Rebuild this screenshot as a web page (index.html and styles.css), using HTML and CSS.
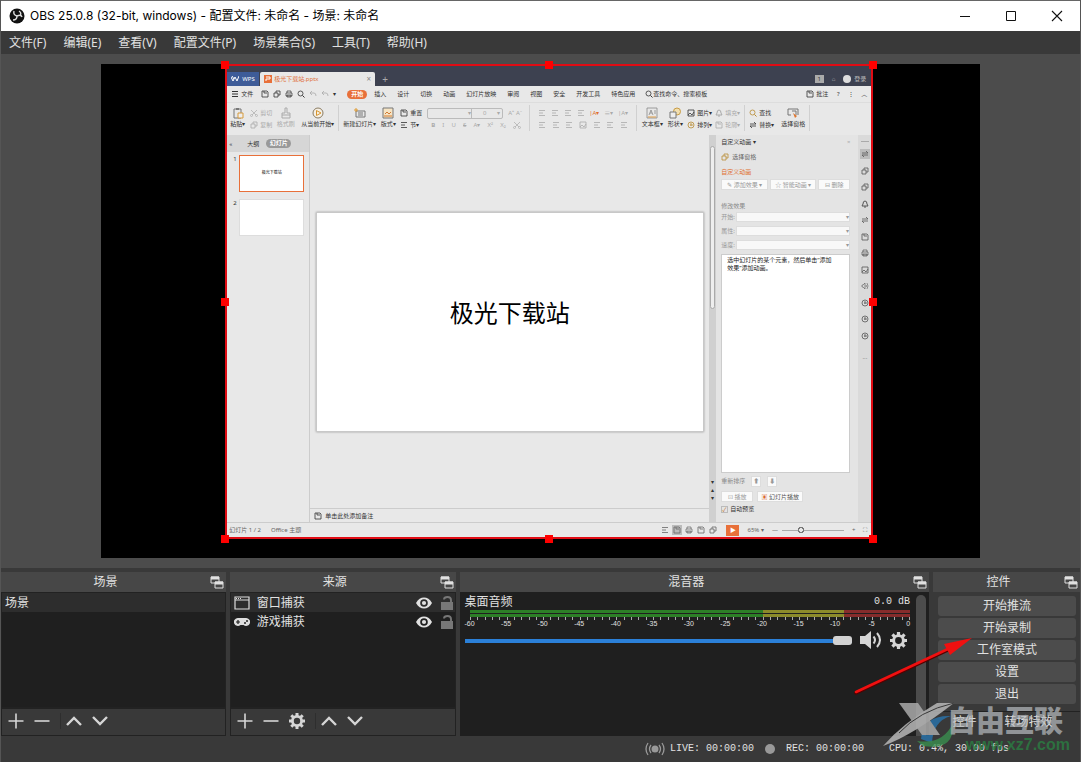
FILE: index.html
```
<!DOCTYPE html>
<html lang="zh-CN">
<head>
<meta charset="utf-8">
<title>OBS 25.0.8</title>
<link rel="stylesheet" href="styles.css">
</head>
<body>
<svg class="defs" aria-hidden="true">
  <symbol id="plus" viewBox="0 0 16 16"><path d="M8 .5v15M.5 8h15" fill="none" stroke="currentColor" stroke-width="1.6"/></symbol>
  <symbol id="minus" viewBox="0 0 16 16"><path d="M.5 8h15" fill="none" stroke="currentColor" stroke-width="1.6"/></symbol>
  <symbol id="up" viewBox="0 0 16 16"><path d="M1 12l7-7 7 7" fill="none" stroke="currentColor" stroke-width="2.4"/></symbol>
  <symbol id="down" viewBox="0 0 16 16"><path d="M1 4l7 7 7-7" fill="none" stroke="currentColor" stroke-width="2.4"/></symbol>
  <symbol id="gear" viewBox="0 0 16 16"><circle cx="8" cy="8" r="4.6" fill="none" stroke="currentColor" stroke-width="2.8"/><path d="M8 0v3M8 13v3M0 8h3M13 8h3M2.3 2.3l2.2 2.2M11.5 11.5l2.2 2.2M2.3 13.7l2.2-2.2M11.5 4.5l2.2-2.2" stroke="currentColor" stroke-width="3"/></symbol>
  <symbol id="eye" viewBox="0 0 16 12"><path fill="currentColor" fill-rule="evenodd" d="M0 6C2 2.300 5 .5 8 .5S14 2.300 16 6c-2 3.700-5 5.500-8 5.500S2 9.700 0 6zm8-3.800a3.800 3.800 0 1 0 0 7.600 3.800 3.800 0 0 0 0-7.600z"/><circle cx="8" cy="6" r="2.100" fill="currentColor"/></symbol>
  <symbol id="lock" viewBox="0 0 14 14"><path d="M1 6h12v8H1z" fill="currentColor"/><path d="M4 3.500Q4 1 7.500 1T11 4V6" fill="none" stroke="currentColor" stroke-width="1.900"/></symbol>
  <symbol id="float" viewBox="0 0 14 13"><path d="M1 1h8v6H1zM5 6h8v6H5z" fill="#474747" stroke="currentColor"/><path d="M1 2h8M5 7h8" stroke="currentColor" stroke-width="3"/></symbol>
  <symbol id="doc" viewBox="0 0 8 8"><path d="M1 1h5l1 1v5H1zM3 1v2h3" fill="none" stroke="currentColor" stroke-width=".8"/></symbol>
  <symbol id="pages" viewBox="0 0 8 8"><path d="M1 3h4v4H1zM3 3V1h4v4H5" fill="none" stroke="currentColor" stroke-width=".8"/></symbol>
  <symbol id="print" viewBox="0 0 8 8"><path d="M1 3h6v3H1zM2 3V1h4v2M2 5h4v2H2z" fill="none" stroke="currentColor" stroke-width=".7"/></symbol>
  <symbol id="find" viewBox="0 0 8 8"><circle cx="3.500" cy="3.500" r="2.500" fill="none" stroke="currentColor" stroke-width=".8"/><path d="M5.500 5.500L7.500 7.500" stroke="currentColor"/></symbol>
  <symbol id="undo" viewBox="0 0 8 8"><path d="M3 1L1 3l2 2M1 3h4q2 0 2 3" fill="none" stroke="currentColor" stroke-width=".8"/></symbol>
  <symbol id="cut" viewBox="0 0 8 8"><path d="M1 1l5 5M7 1L2 6" stroke="currentColor" stroke-width=".7"/><circle cx="1.500" cy="6.500" r="1" fill="none" stroke="currentColor" stroke-width=".6"/><circle cx="6.500" cy="6.500" r="1" fill="none" stroke="currentColor" stroke-width=".6"/></symbol>
  <symbol id="clip" viewBox="0 0 12 12"><path d="M2 2h7v9H2z" fill="none" stroke="#777"/><path d="M4 1h3v2H4z" fill="#777"/><path d="M6 6h5v5H6z" fill="#eee" stroke="#d79a3a"/></symbol>
  <symbol id="brush" viewBox="0 0 12 12"><path d="M5 1h2v5h3v5H2V6h3zM2 8h8" fill="none" stroke="#aaa"/></symbol>
  <symbol id="play" viewBox="0 0 12 12"><circle cx="6" cy="6" r="5" fill="#f5efe4" stroke="#8a7b62"/><path d="M4.500 3.500L9 6 4.500 8.500z" fill="none" stroke="#d6942c"/></symbol>
  <symbol id="slide" viewBox="0 0 12 12"><path d="M2 4h9v6H2zM4 6h5M4 8h5" fill="none" stroke="#777"/><path d="M0 3h4M2 1v4" stroke="#e09a30"/></symbol>
  <symbol id="layout" viewBox="0 0 12 12"><path d="M1 1h10v10H1z" fill="#f6e4c4" stroke="#777"/><path d="M3 7l2-2 2 2 2-2M2 9h8" fill="none" stroke="#d27a32"/></symbol>
  <symbol id="lines" viewBox="0 0 8 8"><path d="M1 1.500h6M1 4h4M1 6.500h6" stroke="currentColor" stroke-width=".8"/></symbol>
  <symbol id="burger" viewBox="0 0 8 8"><path d="M1 1.500h6M1 4h6M1 6.500h6" stroke="currentColor"/></symbol>
  <symbol id="shape" viewBox="0 0 12 12"><circle cx="8" cy="4.500" r="3.500" fill="#f2dfaf" stroke="#c79b45"/><path d="M1 5h6v6H1z" fill="#eee" stroke="#777"/></symbol>
  <symbol id="text" viewBox="0 0 12 12"><path d="M1 1h10v10H1zM3 8l2-5 2 5M4 6h2M8 4h2M8 6h2" fill="none" stroke="#888" stroke-width=".8"/><path d="M2 10h8" stroke="#df9d48"/></symbol>
  <symbol id="pic" viewBox="0 0 8 8"><path d="M1 1h6v6H1zM1 6l2-2 2 2 2-3" fill="none" stroke="currentColor" stroke-width=".8"/></symbol>
  <symbol id="pane" viewBox="0 0 12 12"><path d="M4 8H1V2h10v6M5 4h4v4" fill="none" stroke="#777"/><path d="M6 6l4 3-2 2z" fill="#de762f"/></symbol>
  <symbol id="bell" viewBox="0 0 8 8"><path d="M1 6h6L6 4Q6 1 4 1T2 4zM3 7h2" fill="none" stroke="currentColor"/></symbol>
  <symbol id="swap" viewBox="0 0 8 8"><path d="M1 3h6L5 1M7 5H1l2 2" fill="none" stroke="currentColor" stroke-width=".8"/></symbol>
  <symbol id="ring" viewBox="0 0 8 8"><circle cx="4" cy="4" r="3" fill="none" stroke="currentColor" stroke-width=".8"/><path d="M4 2v3M3 4h3" stroke="currentColor" stroke-width=".8"/></symbol>
  <symbol id="sound" viewBox="0 0 8 8"><path d="M1 3h1l2-2v6L2 5H1zM5 3q1 1 0 2M6 1q2 3 0 6" fill="none" stroke="currentColor" stroke-width=".6"/></symbol>
</svg>
<div class="window">
  <header class="titlebar">
    <svg class="logo" viewBox="0 0 16 16"><circle cx="8" cy="8" r="7.500" fill="#111"/><path d="M5 3q-1 4 3 5 4-2 5 1M8 8q0 4-4 4M10 3q3 2 1 5" fill="none" stroke="#ddd" stroke-width="1.400"/></svg>
    <h1>OBS 25.0.8 (32-bit, windows) - 配置文件: 未命名 - 场景: 未命名</h1>
    <div class="winbtns">
      <button aria-label="最小化"><svg viewBox="0 0 12 12"><path d="M1 6.500h10" stroke="#111"/></svg></button>
      <button aria-label="最大化"><svg viewBox="0 0 12 12"><path d="M1.500 1.500h9v9h-9z" fill="none" stroke="#111"/></svg></button>
      <button aria-label="关闭"><svg viewBox="0 0 12 12"><path d="M1 1l10 10M11 1L1 11" stroke="#111" stroke-width="1.100"/></svg></button>
    </div>
  </header>
  <nav class="menubar">
    <button>文件(F)</button><button>编辑(E)</button><button>查看(V)</button><button>配置文件(P)</button><button>场景集合(S)</button><button>工具(T)</button><button>帮助(H)</button>
  </nav>
  <main class="preview">
    <div class="canvas">
      <div class="source">
        <div class="shot">
          <div class="w-title">
            <span class="w-brand"><svg viewBox="0 0 8 8"><path d="M0 2l2 4 2-4 2 4 2-5M1 1l2 3" fill="none" stroke="#fff"/></svg>WPS</span>
            <span class="w-tab"><svg viewBox="0 0 8 8"><path d="M0 0h8v8H0z" fill="#e8703a"/><path d="M2 2h4v2H2v2" fill="none" stroke="#fff"/></svg>极光下载站.pptx<b>×</b></span>
            <span class="w-plus">+</span>
            <span class="w-user"><i class="w-one">1</i><i>⌂</i><i class="w-face"></i>登录</span>
          </div>
          <div class="w-menu">
            <svg><use href="#burger"/></svg><span class="w-file">文件</span>
            <span class="w-quick"><svg><use href="#doc"/></svg><svg><use href="#pages"/></svg><svg><use href="#print"/></svg><svg><use href="#find"/></svg><svg class="dim"><use href="#undo"/></svg><svg class="dim"><use href="#undo"/></svg><i>▾</i></span>
            <b class="w-pill">开始</b>
            <span class="w-tabs"><span>插入</span><span>设计</span><span>切换</span><span>动画</span><span>幻灯片放映</span><span>审阅</span><span>视图</span><span>安全</span><span>开发工具</span><span>特色应用</span></span>
            <span class="w-search"><svg><use href="#find"/></svg>查找命令、搜索模板</span>
            <span class="w-right"><svg><use href="#doc"/></svg>批注<i>?</i><i>⋮</i><i>︿</i></span>
          </div>
          <div class="w-ribbon">
            <div class="big"><svg><use href="#clip"/></svg><span>粘贴▾</span></div>
            <div class="pair dim"><span><svg><use href="#cut"/></svg>剪切</span><span><svg><use href="#pages"/></svg>复制</span></div>
            <div class="big dim"><svg><use href="#brush"/></svg><span>格式刷</span></div>
            <div class="big"><svg><use href="#play"/></svg><span>从当前开始▾</span></div>
            <hr>
            <div class="big"><svg><use href="#slide"/></svg><span>新建幻灯片▾</span></div>
            <div class="big"><svg><use href="#layout"/></svg><span>版式▾</span></div>
            <div class="pair"><span><svg><use href="#doc"/></svg>重置</span><span><svg><use href="#lines"/></svg>节▾</span></div>
            <div class="pair dim"><span><i class="fontbox"><u>▾</u><u>0</u><u>▾</u></i><i>A⁺</i><i>A⁻</i></span><span class="spread"><b>B</b><i>I</i><i>U</i><s>S</s><i>A▾</i><i>X²</i><i>X₂</i><svg><use href="#cut"/></svg></span></div>
            <hr>
            <div class="pair dim"><span class="spread"><svg><use href="#lines"/></svg><svg><use href="#lines"/></svg><svg><use href="#lines"/></svg><svg><use href="#lines"/></svg><i class="hot">|A▾</i><i>≡▾</i><i>|A▾</i></span><span class="spread"><svg><use href="#lines"/></svg><svg><use href="#lines"/></svg><svg><use href="#lines"/></svg><svg><use href="#pic"/></svg><svg><use href="#lines"/></svg><svg><use href="#lines"/></svg><svg><use href="#lines"/></svg></span></div>
            <hr>
            <div class="big"><svg><use href="#text"/></svg><span>文本框▾</span></div>
            <div class="big"><svg><use href="#shape"/></svg><span>形状▾</span></div>
            <div class="pair"><span><svg><use href="#pic"/></svg>图片▾</span><span><svg class="gold"><use href="#ring"/></svg>排列▾</span></div>
            <div class="pair dim"><span><svg><use href="#bell"/></svg>填充▾</span><span><svg><use href="#doc"/></svg>轮廓▾</span></div>
            <hr>
            <div class="pair"><span><svg class="gold"><use href="#find"/></svg>查找</span><span><svg><use href="#swap"/></svg>替换▾</span></div>
            <div class="big"><svg><use href="#pane"/></svg><span>选择窗格</span></div>
            <hr>
          </div>
          <div class="w-body">
            <aside class="w-thumbs">
              <div class="w-thead"><span>«</span><span>大纲</span><b>幻灯片</b></div>
              <div class="w-thumb on"><em>1</em><div>极光下载站</div></div>
              <div class="w-thumb"><em>2</em><div></div></div>
            </aside>
            <section class="w-edit">
              <div class="w-stage"><div class="w-slide">极光下载站</div></div>
              <div class="w-notes"><svg><use href="#doc"/></svg>单击此处添加备注</div>
            </section>
            <div class="w-scroll"><i></i><span>▾</span><span>▴</span><span>▾</span></div>
            <section class="w-pane">
              <div class="row between"><span>自定义动画 ▾</span><span class="dim">×</span></div>
              <div class="row mid"><svg class="gold"><use href="#pages"/></svg>选择窗格</div>
              <div class="row hot">自定义动画</div>
              <div class="w-btns"><button>✎ 添加效果 ▾</button><button>☆ 智能动画 ▾</button><button>⊟ 删除</button></div>
              <div class="row mod">修改效果</div>
              <label class="w-field">开始:<span>▾</span></label>
              <label class="w-field">属性:<span>▾</span></label>
              <label class="w-field">速度:<span>▾</span></label>
              <div class="w-list">选中幻灯片的某个元素，然后单击“添加效果”添加动画。</div>
              <div class="row order">重新排序 <button>⬆</button><button>⬇</button></div>
              <div class="w-btns two"><button>⊡ 播放</button><button class="dark"><b>▣</b> 幻灯片播放</button></div>
              <div class="row check"><i>✓</i>自动预览</div>
            </section>
            <div class="w-side">
              <i></i><svg class="on"><use href="#swap"/></svg><svg><use href="#pages"/></svg><svg><use href="#pages"/></svg><svg><use href="#bell"/></svg><svg><use href="#swap"/></svg><svg><use href="#doc"/></svg><svg><use href="#print"/></svg><svg><use href="#pic"/></svg><svg><use href="#sound"/></svg><svg><use href="#ring"/></svg><svg><use href="#ring"/></svg><svg><use href="#ring"/></svg><span>···</span>
            </div>
          </div>
          <div class="w-status">
            <span>幻灯片 1 / 2</span><span>Office 主题</span>
            <div class="w-views"><svg><use href="#lines"/></svg><svg class="on"><use href="#doc"/></svg><svg><use href="#print"/></svg><svg><use href="#doc"/></svg><svg><use href="#pages"/></svg><b>▶</b><span>65% ▾</span><span>—</span><i class="w-zoom"></i><span>+</span><span>⛶</span></div>
          </div>
        </div>
        <i class="h tl"></i><i class="h tc"></i><i class="h tr"></i><i class="h ml"></i><i class="h mr"></i><i class="h bl"></i><i class="h bc"></i><i class="h br"></i>
      </div>
    </div>
  </main>
  <div class="docks">
    <section class="dock">
      <header><h2>场景</h2><button aria-label="浮动"><svg><use href="#float"/></svg></button></header>
      <ul class="list"><li class="sel">场景</li></ul>
      <div class="tools"><button aria-label="添加"><svg><use href="#plus"/></svg></button><button aria-label="移除"><svg><use href="#minus"/></svg></button><hr><button aria-label="上移"><svg><use href="#up"/></svg></button><button aria-label="下移"><svg><use href="#down"/></svg></button></div>
    </section>
    <section class="dock">
      <header><h2>来源</h2><button aria-label="浮动"><svg><use href="#float"/></svg></button></header>
      <ul class="list src">
        <li class="sel"><svg class="kind" viewBox="0 0 16 14"><path d="M1 1h14v12H1zM1 4h14" fill="none" stroke="#ddd" stroke-width="1.200"/><path d="M2 2.500h6" stroke="#ddd" stroke-dasharray="1 1"/></svg><span>窗口捕获</span><button aria-label="可见"><svg class="eye"><use href="#eye"/></svg></button><button aria-label="锁定"><svg class="lock"><use href="#lock"/></svg></button></li>
        <li><svg class="kind" viewBox="0 0 16 14"><path fill="#ddd" fill-rule="evenodd" d="M4 3h8a4 4 0 1 1-2.500 7h-3A4 4 0 1 1 4 3zM3.400 5v1.400H2v1.200h1.400V9h1.200V7.600H6V6.400H4.600V5z"/><circle cx="11" cy="8" r="1" fill="#222"/><circle cx="13" cy="6" r="1" fill="#222"/></svg><span>游戏捕获</span><button aria-label="可见"><svg class="eye"><use href="#eye"/></svg></button><button aria-label="锁定"><svg class="lock"><use href="#lock"/></svg></button></li>
      </ul>
      <div class="tools"><button aria-label="添加"><svg><use href="#plus"/></svg></button><button aria-label="移除"><svg><use href="#minus"/></svg></button><button aria-label="属性"><svg><use href="#gear"/></svg></button><hr><button aria-label="上移"><svg><use href="#up"/></svg></button><button aria-label="下移"><svg><use href="#down"/></svg></button></div>
    </section>
    <section class="dock">
      <header><h2>混音器</h2><button aria-label="浮动"><svg><use href="#float"/></svg></button></header>
      <div class="mixer">
        <div class="channel">
          <div class="names"><label for="vol">桌面音频</label><span class="mono">0.0 dB</span></div>
          <div class="meter"><i></i><i></i></div>
          <div class="ticks"></div>
          <div class="scale"><span>-60</span><span>-55</span><span>-50</span><span>-45</span><span>-40</span><span>-35</span><span>-30</span><span>-25</span><span>-20</span><span>-15</span><span>-10</span><span>-5</span><span>0</span></div>
          <div class="volume"><input id="vol" type="range" value="100">
            <button aria-label="静音"><svg class="speaker" viewBox="0 0 24 18"><path d="M1 5h5l6-5v18l-6-5H1z" fill="currentColor"/><path d="M14.500 5.500q3 3.500 0 7M18 2q6 7 0 14" fill="none" stroke="currentColor" stroke-width="2"/></svg></button>
            <button aria-label="设置"><svg><use href="#gear"/></svg></button></div>
        </div>
        <div class="bar"></div>
      </div>
    </section>
    <section class="dock">
      <header><h2>控件</h2><button aria-label="浮动"><svg><use href="#float"/></svg></button></header>
      <div class="controls"><button>开始推流</button><button>开始录制</button><button>工作室模式</button><button>设置</button><button>退出</button></div>
      <div class="tabs"><button>控件</button><button>转场特效</button></div>
    </section>
  </div>
  <footer class="status mono">
    <svg class="live" viewBox="0 0 20 14"><circle cx="10" cy="7" r="3.500" fill="#999"/><path d="M6 3q-3 4 0 8M14 3q3 4 0 8M3 1q-4 6 0 12M17 1q4 6 0 12" fill="none" stroke="#999" stroke-width="1.300"/></svg>
    <span>LIVE: 00:00:00</span><i class="dot"></i><span>REC: 00:00:00</span><span class="cpu">CPU: 0.4%, 30.00 fps</span>
  </footer>
  <svg class="arrow" viewBox="0 0 122 60"><path d="M2 57L96 13" stroke="#500" stroke-width="3.500" stroke-linecap="round"/><path d="M2 56L96 12" stroke="#f01010" stroke-width="2.600" stroke-linecap="round"/><path d="M118 2L90 8l6 11z" fill="#f01010"/></svg>
  <div class="mark">
    <svg viewBox="0 0 72 46"><path d="M38 38Q40 14 68 15 50 20 49 42z" fill="#2878b4" opacity=".9"/><path d="M34 40Q60 44 70 22 72 50 40 45z" fill="#3a9350" opacity=".9"/><path d="M16 2h19l22 32H39z" fill="#aaa"/><path d="M71 2H54Q20 22 0 45 30 34 71 2z" fill="#b8b8b8"/><path d="M71 2Q36 10 16 32" fill="none" stroke="#3a3a3a"/></svg>
    <strong>自由互联</strong><span class="url">www.xz7.com</span>
  </div>
</div>
</body>
</html>
```
FILE: styles.css
```
* { box-sizing: border-box; }
body { margin: 0; font: 12px/16px "Noto Sans", "Noto Sans CJK SC", sans-serif; color: #e1e1e1; }
h1, h2, ul { margin: 0; padding: 0; font-size: 12px; font-weight: 400; }
button { margin: 0; padding: 0; border: 0; background: none; color: inherit; font: inherit; }
svg { display: block; flex: none; }
i, em { font-style: normal; }
.defs { position: absolute; width: 0; height: 0; }
.mono { font-family: "Liberation Mono", "Noto Sans CJK SC", monospace; font-size: 10px; }
.window { position: relative; min-height: 100vh; display: flex; flex-direction: column; background: #393939; border: solid #555; border-width: 0 1px; }

.titlebar { display: flex; align-items: center; height: 31px; padding-left: 8px; background: #fff; color: #000; border-top: 1px solid #666; }
.titlebar h1 { flex: 1; padding-left: 5px; font-family: Inter, "Noto Sans CJK SC", sans-serif; }
.logo { width: 16px; height: 16px; }
.winbtns { display: flex; }
.winbtns button { width: 46px; height: 28px; display: flex; align-items: center; justify-content: center; }
.winbtns svg { width: 12px; height: 12px; }
.menubar { display: flex; align-items: center; gap: 17px; height: 23px; padding-left: 8px; }

.preview { flex: 1; display: flex; justify-content: center; align-items: center; padding: 10px 0; background: #4c4c4c; }
.canvas { position: relative; width: 81.4%; aspect-ratio: 16 / 9; background: #000; }
.source { position: absolute; left: 14.1%; top: 0; width: 73.8%; height: 96.2%; border: 2px solid #e00c14; }
.h { position: absolute; width: 8px; height: 8px; margin: -4px; background: #f00; }
.tl, .ml, .bl { left: -2px; }
.tc, .bc { left: 50%; }
.tr, .mr, .br { right: -2px; }
.tl, .tc, .tr { top: -1px; }
.ml, .mr { top: 50%; }
.bl, .bc, .br { bottom: -2px; }

.shot { height: 100%; display: flex; flex-direction: column; overflow: hidden; background: #e8e8e8; color: #333; font-size: 6px; line-height: 8px; white-space: nowrap; }
.shot svg { width: 8px; height: 8px; }
.shot .dim { color: #aaa; }
.shot .gold { color: #b88a30; }
.shot .hot { color: #e07030; }
.w-title { display: flex; align-items: flex-end; height: 20px; background: #3d4150; color: #fff; }
.w-title > * { height: 14px; display: flex; align-items: center; }
.w-brand { width: 32px; gap: 3px; padding-left: 4px; background: #3e5c98; }
.w-tab { width: 115px; gap: 2px; margin-left: 1px; padding: 0 4px; border-radius: 2px 2px 0 0; background: #e8e8e8; color: #e0703a; }
.w-tab b { margin-left: auto; color: #888; font-size: 8px; font-weight: 400; }
.w-plus { padding-left: 7px; font-size: 10px; color: #aaa; }
.w-user { margin-left: auto; gap: 8px; padding-right: 5px; color: #bbb; }
.w-one { width: 9px; background: #aaa; color: #333; text-align: center; }
.w-face { width: 8px; height: 8px; border-radius: 50%; background: #ddd; margin-right: -5px; }
.w-menu { display: flex; align-items: center; height: 17px; padding-left: 4px; border-bottom: 1px solid #ddd; }
.w-file { padding-left: 2px; }
.w-quick { display: flex; gap: 4px; width: 86px; margin-left: 8px; }
.w-pill { width: 20px; height: 9px; border-radius: 5px; background: #e8703a; color: #fff; text-align: center; }
.w-tabs { display: flex; gap: 11px; padding-left: 7px; }
.w-search { display: flex; padding-left: 10px; }
.w-right { display: flex; gap: 2px; margin-left: auto; padding-right: 4px; }
.w-right i { width: 6px; margin-left: 5px; text-align: center; }
.w-ribbon { display: grid; grid-template-columns: 17px 20px 23px 33px 1px 33px 16px 23px 98px 1px 98px 1px 22px 16px 24px 25px 1px 28px 24px 1px; gap: 4px; height: 32px; padding: 2px 2px 4px; }
.w-ribbon hr { width: 1px; height: 26px; margin: 0; border: 0; background: #d0d0d0; }
.big { display: flex; flex-direction: column; align-items: center; gap: 1px; }
.big svg { width: 12px; height: 12px; margin-top: 2px; }
.pair { display: flex; flex-direction: column; gap: 2px; padding-top: 3px; }
.pair > span { display: flex; align-items: center; gap: 2px; height: 10px; }
.pair > .spread { justify-content: space-between; padding: 0 4px; }
.fontbox { display: flex; justify-content: space-between; width: 76px; height: 11px; margin-right: 3px; padding: 0 2px; border: 1px solid #bbb; border-radius: 2px; }
.fontbox u { text-decoration: none; }
.fontbox u:first-child { width: 42px; text-align: right; border-right: 1px solid #bbb; }
.w-body { flex: 1; min-height: 0; display: grid; grid-template-columns: 83px 1fr 7px 142px 13px; border-bottom: 1px solid #ccc; }
.w-thumbs { border-right: 1px solid #ccc; }
.w-thead { display: flex; align-items: center; gap: 7px; height: 17px; padding-left: 2px; margin-bottom: 3px; background: #d6d6d6; }
.w-thead span + span { margin-left: 8px; }
.w-thead b { width: 25px; height: 9px; border-radius: 5px; background: #999; color: #fff; text-align: center; }
.w-thumb { display: flex; gap: 2px; margin-bottom: 7px; padding-left: 6px; }
.w-thumb em { width: 4px; }
.w-thumb div { width: 65px; height: 37px; border: 1px solid #ddd; background: #fff; color: #000; text-align: center; line-height: 34px; font-size: 4px; }
.w-thumb.on div { border-color: #e8703a; }
.w-edit { display: flex; flex-direction: column; }
.w-stage { flex: 1; display: flex; align-items: center; justify-content: center; }
.w-slide { display: flex; align-items: center; justify-content: center; width: 388px; aspect-ratio: 388 / 220; border: 1px solid #c8c8c8; box-shadow: 0 0 2px #999; background: #fff; color: #000; font-size: 24px; padding-bottom: 18px; }
.w-notes { display: flex; align-items: center; gap: 3px; height: 14px; padding-left: 4px; border-top: 1px solid #ccc; }
.w-scroll { display: flex; flex-direction: column; align-items: center; background: #d0d0d0; padding: 11px 0 20px; }
.w-scroll i { width: 5px; height: 163px; margin-bottom: auto; border: 1px solid #aaa; border-radius: 3px; background: #eee; }
.w-pane { display: flex; flex-direction: column; padding: 2px 8px 8px 5px; background: #e4e4e4; }
.row { display: flex; align-items: center; height: 10px; }
.between { justify-content: space-between; }
.row.mid { height: 20px; gap: 3px; color: #666; }
.w-btns { display: grid; grid-template-columns: 47px 46px 32px; gap: 2px; margin: 2px 0; }
.w-btns button, .order button { height: 11px; background: #fafafa; border: 1px solid #ddd; color: #999; line-height: 8px; }
.row.mod { margin: 9px 0 1px; color: #888; }
.w-field { display: flex; justify-content: space-between; align-items: center; height: 10px; margin-bottom: 4px; color: #999; }
.w-field span { width: 114px; height: 10px; border: 1px solid #ddd; background: #f8f8f8; text-align: right; }
.w-list { flex: 1; padding: 1px 14px 0 5px; border: 1px solid #ccc; background: #fff; color: #222; white-space: normal; }
.order { margin: 3px 0; gap: 6px; color: #888; }
.order button { width: 10px; }
.two { grid-template-columns: 32px 46px; gap: 4px; }
.w-btns .dark { color: #555; }
.dark b { color: #d86a30; }
.check { gap: 2px; }
.check i { width: 7px; height: 7px; border: 1px solid #bbb; line-height: 6px; color: #c07030; }
.w-side { display: flex; flex-direction: column; align-items: center; justify-content: space-between; padding: 6px 0 160px; background: #dadada; color: #555; }
.w-side > i { width: 8px; height: 1px; background: #aaa; }
.w-side .on, .w-views .on { background: #bbb; outline: 1px solid #bbb; }
.w-side span { margin-top: 6px; }
.w-status { display: flex; align-items: center; gap: 10px; height: 14px; padding-left: 2px; color: #666; }
.w-views { display: flex; align-items: center; gap: 4px; margin-left: auto; padding-right: 4px; }
.w-views b { width: 13px; height: 11px; margin-left: 5px; background: #e8703a; color: #fff; text-align: center; line-height: 11px; }
.w-views span { margin-left: 4px; }
.w-zoom { width: 62px; height: 6px; background: radial-gradient(circle at 19px 3px, #e8e8e8 2px, #777 2px 3px, transparent 3px), linear-gradient(#aaa, #aaa) 0 3px / 100% 1px no-repeat; }

.docks { display: grid; grid-template-columns: 225fr 226fr 470fr 147fr; gap: 4px; height: 168px; padding-top: 4px; font-family: "Liberation Sans", "Noto Sans CJK SC", sans-serif; }
.dock { display: flex; flex-direction: column; min-width: 0; }
.dock header { display: flex; align-items: center; height: 20px; padding: 0 2px 0 16px; background: #474747; }
.dock h2 { flex: 1; text-align: center; padding-right: 16px; }
.dock header svg { width: 14px; height: 13px; }
.list { flex: 1; list-style: none; background: #1f1f1f; border: 1px solid #222; }
.list li { display: flex; align-items: center; height: 19px; padding-left: 3px; }
.list .sel { background: #2d2d2d; }
.src span { flex: 1; padding-left: 7px; }
.kind { width: 16px; height: 14px; }
.eye { width: 16px; height: 12px; }
.lock { width: 14px; height: 14px; margin: 0 1px 0 8px; color: #777; }
.tools { display: flex; align-items: center; gap: 10px; height: 28px; padding: 0 0 2px 6px; border: 1px solid #222; color: #d5d5d5; }
.tools svg { width: 16px; height: 16px; }
.tools hr { width: 1px; height: 16px; margin: 0; border: 0; background: #2e2e2e; }
.tools hr + button { margin-left: -5px; }
.mixer { flex: 1; display: flex; background: #1f1f1f; padding: 2px 3px 0 5px; gap: 6px; }
.channel { flex: 1; }
.names { display: flex; justify-content: space-between; height: 16px; }
.meter { display: grid; gap: 1px; margin-left: 5px; }
.meter i { height: 3px; background: linear-gradient(90deg, #2d7f27 66.6%, #8b8a2b 66.6% 85%, #852c2c 85%); }
.ticks { height: 3px; margin-left: 5px; background: repeating-linear-gradient(90deg, #aaa 0 1px, transparent 1px calc((100% - 1px) / 60)); }
.scale { display: flex; justify-content: space-between; margin: 0 -6px 0 -3px; font-size: 7px; line-height: 8px; }
.scale span { width: 16px; text-align: center; }
.volume { display: flex; align-items: center; gap: 7px; height: 18px; margin-top: 3px; padding-right: 3px; color: #d5d5d5; }
.volume input { flex: 1; min-width: 0; height: 9px; margin: 0; appearance: none; background: linear-gradient(#2b80d8, #2b80d8) 0 3px / 100% 4px no-repeat; }
.volume input::-webkit-slider-thumb { appearance: none; width: 19px; height: 9px; border-radius: 3px; background: #d2d2d2; }
.speaker { width: 24px; height: 18px; }
.volume button:last-child svg { width: 17px; height: 17px; }
.bar { width: 10px; margin-top: 1px; border-radius: 5px 5px 0 0; background: #4c4c4c; }
.controls { display: grid; gap: 2px; padding: 4px 4px 7px 5px; }
.controls button { height: 20px; border-radius: 3px; background: #4c4c4c; }
.tabs { flex: 1; display: flex; justify-content: center; align-items: center; gap: 28px; padding: 0 8px 4px 0; border-top: 1px solid #222; }
.status { display: flex; align-items: center; justify-content: flex-end; height: 26px; padding-right: 71px; }
.live { width: 20px; height: 14px; margin-right: 5px; }
.dot { width: 10px; height: 10px; margin: 0 11px; border-radius: 50%; background: #999; }
.cpu { margin-left: 25px; }
.arrow { position: absolute; right: 104px; bottom: 66px; width: 122px; height: 60px; }
.mark { position: absolute; right: 9px; bottom: 8px; width: 188px; height: 54px; opacity: .85; }
.mark svg { width: 72px; height: 46px; margin-top: 1px; }
.mark strong { position: absolute; right: 8px; top: 3px; font: 900 29px/32px "Noto Sans CJK SC", sans-serif; color: #bcc0c4; opacity: .8; }
.url { position: absolute; right: 1px; bottom: 0; font: 700 16px/18px "Liberation Sans", sans-serif; color: #2c7a42; }
```
